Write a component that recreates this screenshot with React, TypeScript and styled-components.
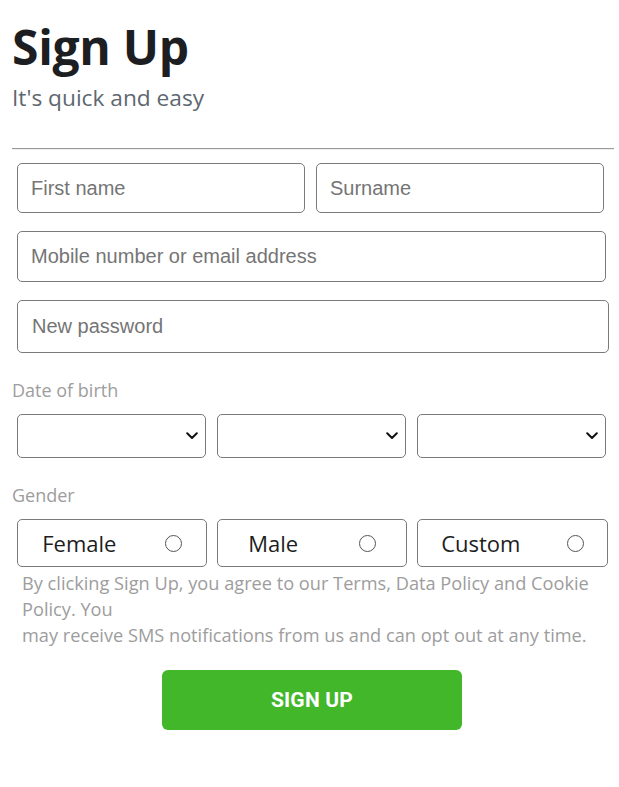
import React from "react";
import styled, { createGlobalStyle } from "styled-components";

const Global = createGlobalStyle`
  html, body { margin: 0; padding: 0; background: #ffffff; }
  body { font-family: "Open Sans", "Noto Sans", sans-serif; }
  * { box-sizing: border-box; }
`;

const Page = styled.div`
  width: 619px;
  padding: 19px 5px 40px 12px;
`;

const Title = styled.h1`
  margin: 0;
  font-size: 48px;
  line-height: 56px;
  font-weight: 700;
  color: #1c1e21;
  letter-spacing: -0.3px;
`;

const Subtitle = styled.p`
  margin: 9px 0 0;
  font-size: 22.7px;
  line-height: 28px;
  color: #606770;
`;

const Rule = styled.hr`
  margin: 36px 0 0;
  height: 0;
  border: none;
  border-top: 1px solid #9a9a9a;
  border-bottom: 1px solid #eeeeee;
`;

const Form = styled.form`
  display: flex;
  flex-direction: column;
  padding-left: 5px;
  margin-top: 13px;
`;

const Row = styled.div<{ $top?: number; $gap?: number }>`
  display: flex;
  gap: ${(p) => p.$gap ?? 11}px;
  margin-top: ${(p) => p.$top ?? 0}px;
`;

const TextField = styled.input<{ $w: number; $h: number; $pad?: number }>`
  width: ${(p) => p.$w}px;
  height: ${(p) => p.$h}px;
  border: 1px solid #7a7a7a;
  border-radius: 5px;
  padding: 0 0 0 ${(p) => p.$pad ?? 13}px;
  font-family: "Liberation Sans", Arial, sans-serif;
  font-size: 20px;
  color: #1c1e21;
  background: #fff;
  outline: none;
  &::placeholder { color: #757575; }
`;

const FieldLabel = styled.div<{ $top: number }>`
  margin: ${(p) => p.$top}px 0 0 -5px;
  font-size: 18px;
  line-height: 22px;
  color: #9d9d9d;
`;

const SelectBox = styled.div`
  width: 189px;
  height: 44px;
  border: 1px solid #7a7a7a;
  border-radius: 5px;
  display: flex;
  align-items: center;
  justify-content: flex-end;
  padding-right: 7px;
  background: #fff;
`;

const Choice = styled.label<{ $w: number }>`
  width: ${(p) => p.$w}px;
  height: 48px;
  border: 1px solid #7a7a7a;
  border-radius: 5px;
  display: flex;
  align-items: center;
  justify-content: space-around;
  font-size: 22px;
  color: #1c1e21;
`;

const Circle = styled.span`
  width: 17px;
  height: 17px;
  border: 1.3px solid #555;
  border-radius: 50%;
`;

const Notice = styled.p`
  margin: 3px 0 0 10px;
  font-size: 18.2px;
  line-height: 26px;
  color: #9d9d9d;
`;

const SubmitRow = styled.div`
  display: flex;
  justify-content: center;
  margin-top: 22px;
  padding-right: 2px;
`;

const Submit = styled.button`
  width: 300px;
  height: 60px;
  border: none;
  border-radius: 6px;
  background: #42b72a;
  color: #ffffff;
  font-family: Roboto, "Liberation Sans", sans-serif;
  font-weight: 700;
  font-size: 21px;
  letter-spacing: 0.2px;
`;

const Chevron = () => (
  <svg width="12" height="8" viewBox="0 0 12 8" fill="none">
    <path d="M1.2 1.3 L6 6 L10.8 1.3" stroke="#111" strokeWidth="2" strokeLinecap="round" strokeLinejoin="round" />
  </svg>
);

export default function App() {
  return (
    <Page>
      <Global />
      <Title>Sign Up</Title>
      <Subtitle>It's quick and easy</Subtitle>
      <Rule />
      <Form onSubmit={(e) => e.preventDefault()}>
        <Row>
          <TextField $w={288} $h={50} placeholder="First name" />
          <TextField $w={288} $h={50} placeholder="Surname" />
        </Row>
        <Row $top={18}>
          <TextField $w={589} $h={51} placeholder="Mobile number or email address" />
        </Row>
        <Row $top={18}>
          <TextField $w={592} $h={53} $pad={14} placeholder="New password" type="password" />
        </Row>
        <FieldLabel $top={26}>Date of birth</FieldLabel>
        <Row $top={13}>
          <SelectBox><Chevron /></SelectBox>
          <SelectBox><Chevron /></SelectBox>
          <SelectBox><Chevron /></SelectBox>
        </Row>
        <FieldLabel $top={26}>Gender</FieldLabel>
        <Row $top={13} $gap={10}>
          <Choice $w={190}>Female<Circle /></Choice>
          <Choice $w={190}>Male<Circle /></Choice>
          <Choice $w={191}>Custom<Circle /></Choice>
        </Row>
      </Form>
      <Notice>
        By clicking Sign Up, you agree to our Terms, Data Policy and Cookie
        <br />
        Policy. You
        <br />
        may receive SMS notifications from us and can opt out at any time.
      </Notice>
      <SubmitRow>
        <Submit type="button">SIGN UP</Submit>
      </SubmitRow>
    </Page>
  );
}
